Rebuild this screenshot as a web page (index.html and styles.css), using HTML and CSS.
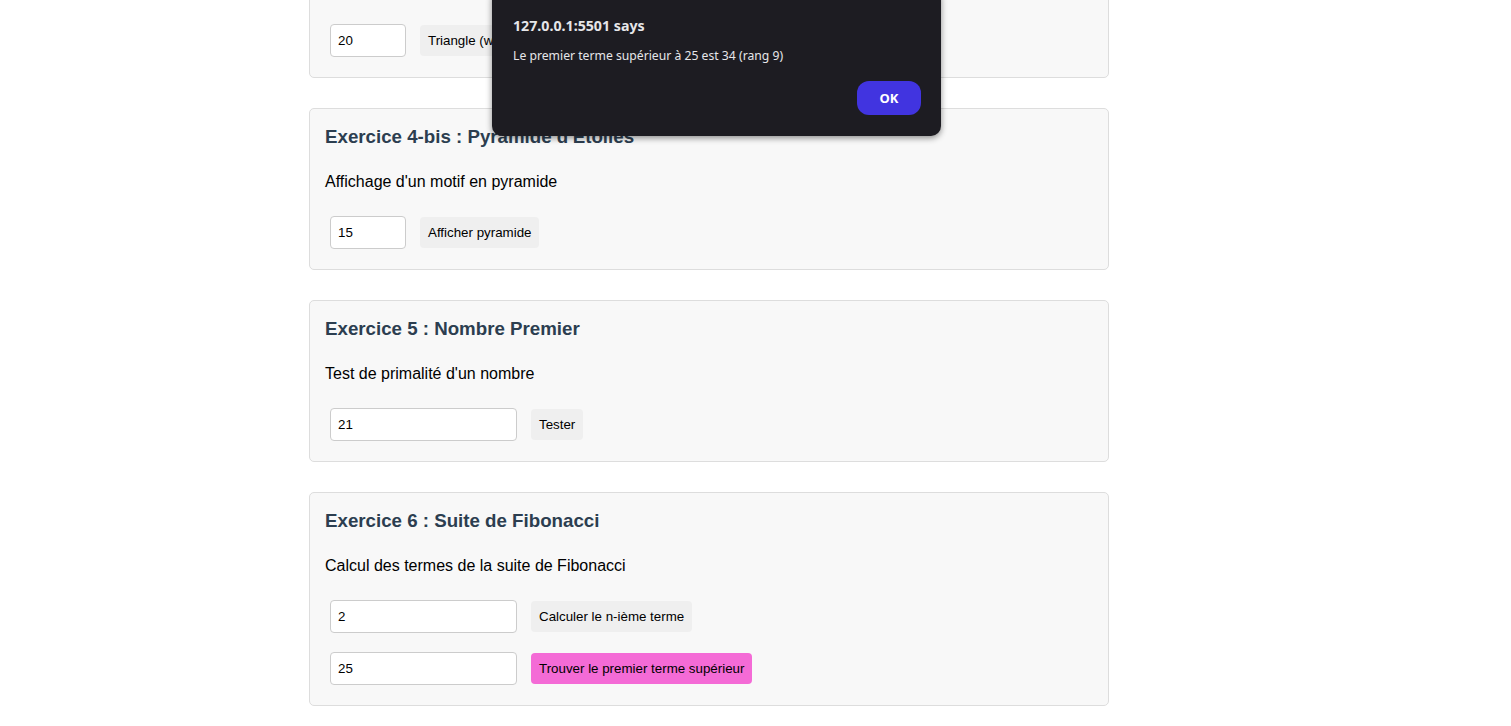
FILE: index.html
```html
<!DOCTYPE html>
<html lang="fr">
<head>
<meta charset="utf-8">
<title>Exercices JavaScript</title>
<link rel="stylesheet" href="styles.css">
</head>
<body>
<main class="page">
  <section class="card">
    <h3>Exercice 4 : Triangle d'Étoiles</h3>
    <p>Affichage d'un motif en triangle</p>
    <div class="row">
      <input class="field small" type="text" value="20">
      <button class="btn">Triangle (while)</button>
      <button class="btn">Triangle (for)</button>
    </div>
  </section>

  <section class="card">
    <h3>Exercice 4-bis : Pyramide d'Étoiles</h3>
    <p>Affichage d'un motif en pyramide</p>
    <div class="row">
      <input class="field small" type="text" value="15">
      <button class="btn">Afficher pyramide</button>
    </div>
  </section>

  <section class="card">
    <h3>Exercice 5 : Nombre Premier</h3>
    <p>Test de primalité d'un nombre</p>
    <div class="row">
      <input class="field" type="text" value="21">
      <button class="btn">Tester</button>
    </div>
  </section>

  <section class="card">
    <h3>Exercice 6 : Suite de Fibonacci</h3>
    <p>Calcul des termes de la suite de Fibonacci</p>
    <div class="row">
      <input class="field" type="text" value="2">
      <button class="btn">Calculer le n-ième terme</button>
    </div>
    <div class="row">
      <input class="field" type="text" value="25">
      <button class="btn pink">Trouver le premier terme supérieur</button>
    </div>
  </section>
</main>

<div class="dialog" role="alertdialog">
  <div class="dialog-title">127.0.0.1:5501 says</div>
  <div class="dialog-msg">Le premier terme supérieur à 25 est 34 (rang 9)</div>
  <div class="dialog-actions">
    <button class="dialog-ok">OK</button>
  </div>
</div>
</body>
</html>
```

FILE: styles.css
```css
html, body {
  margin: 0;
  padding: 0;
  background: #ffffff;
  overflow: hidden;
}

body {
  font-family: "Liberation Sans", Arial, sans-serif;
  color: #000;
}

.page {
  width: 800px;
  margin: -84px 0 0 309px;
  display: flex;
  flex-direction: column;
  gap: 30px;
}

.card {
  background: #f8f8f8;
  border: 1px solid #dddddd;
  border-radius: 5px;
  padding: 15px;
}

.card h3 {
  margin: 2px 0 25px;
  font-size: 18.72px;
  line-height: 22px;
  font-weight: bold;
  color: #2c3e50;
}

.card p {
  margin: 0 0 20px;
  font-size: 16px;
  line-height: 18px;
}

.row {
  display: flex;
  align-items: center;
  padding: 5px;
  gap: 14px;
}

.row + .row {
  margin-top: 9px;
}

.field {
  box-sizing: border-box;
  width: 187px;
  height: 33px;
  border: 1px solid #cccccc;
  border-radius: 4px;
  padding: 0 7px;
  font-family: "Liberation Sans", Arial, sans-serif;
  font-size: 13.333px;
  color: #000;
  background: #fff;
}

.field.small {
  width: 76px;
}

.btn {
  height: 31px;
  border: none;
  border-radius: 4px;
  background: #efefef;
  padding: 0 8px;
  font-family: "Liberation Sans", Arial, sans-serif;
  font-size: 13.333px;
  color: #000;
}

.btn.pink {
  background: #f46bd6;
}

.dialog {
  position: absolute;
  top: -12px;
  left: 492px;
  width: 449px;
  height: 148px;
  box-sizing: border-box;
  background: #1d1c22;
  border-radius: 10px;
  box-shadow: 0 2px 6px rgba(0, 0, 0, 0.45);
  padding: 28px 20px 0 21px;
  font-family: "Noto Sans", "Segoe UI", sans-serif;
  color: #e6e6e9;
  display: flex;
  flex-direction: column;
}

.dialog-title {
  font-size: 14.2px;
  font-weight: bold;
  line-height: 20px;
}

.dialog-msg {
  margin-top: 11px;
  font-size: 12.2px;
  line-height: 18px;
}

.dialog-actions {
  margin-top: 16px;
  display: flex;
  justify-content: flex-end;
}

.dialog-ok {
  width: 64px;
  height: 34px;
  border: none;
  border-radius: 12px;
  background: #4134e0;
  color: #ffffff;
  font-family: "Noto Sans", "Segoe UI", sans-serif;
  font-size: 13px;
  font-weight: bold;
}
```
